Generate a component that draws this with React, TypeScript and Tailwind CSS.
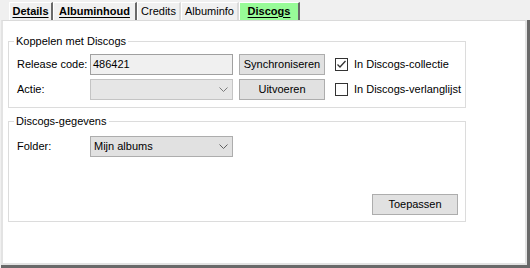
import React from 'react';

// Tabs of the album editor (widths follow the WinForms tab strip)
const tabs = [
  { label: 'Details', bold: true, cls: 'w-[44px] border-r-2 border-r-[#696969]' },
  { label: 'Albuminhoud', bold: true, cls: 'w-[84px] border-r-2 border-r-[#696969]' },
  { label: 'Credits', bold: false, cls: 'w-[44px] border-r-2 border-r-[#dadada]' },
  { label: 'Albuminfo', bold: false, cls: 'w-[58px] border-r-2 border-r-[#dadada]' },
  { label: 'Discogs', bold: true, cls: 'w-[61px] border-r-2 border-r-[#696969] bg-[#98fb98]', active: true },
];

const Chevron = ({ color }: { color: string }) => (
  <svg width="9" height="5" viewBox="0 0 9 5" className="shrink-0">
    <polyline points="0.5,0.5 4.5,4.5 8.5,0.5" fill="none" stroke={color} strokeWidth="1" />
  </svg>
);

const CheckBox = ({ checked, label }: { checked: boolean; label: string }) => (
  <div className="flex items-center">
    <div className="w-[13px] h-[13px] border border-[#333333] bg-white flex items-center justify-center">
      {checked && (
        <svg width="11" height="11" viewBox="0 0 11 11">
          <polyline points="1.5,5.5 4,8 9.5,2" fill="none" stroke="#333333" strokeWidth="1.3" />
        </svg>
      )}
    </div>
    <span className="ml-[6px]">{label}</span>
  </div>
);

const Button = ({ children, className = '' }: { children: React.ReactNode; className?: string }) => (
  <div className={`w-[86px] h-[21px] bg-[#e1e1e1] border border-[#adadad] flex items-center justify-center ${className}`}>
    {children}
  </div>
);

export default function App() {
  return (
    <div className="w-[530px] h-[268px] bg-[#f0f0f0] flex flex-col text-[11px] leading-[13px] text-black font-['Liberation_Sans',Arial,sans-serif]">
      {/* tab strip */}
      <div className="h-[20px] pt-[2px] pl-[9px] flex">
        {tabs.map((t) => (
          <div
            key={t.label}
            className={`h-[18px] border-l border-t border-white flex items-center justify-center pb-[1px] ${t.cls} ${
              t.bold ? 'font-bold underline decoration-1 underline-offset-[2px]' : ''
            }`}
          >
            {t.label}
          </div>
        ))}
      </div>

      {/* tab page */}
      <div className="flex-1 ml-[1px] border-r-[3px] border-b-[3px] border-[#696969] flex">
        <div className="flex-1 bg-white border-l-2 border-r-2 border-b-2 border-[#e3e3e3] border-t border-t-[#dadada] pt-[14px] pl-[5px]">
          <fieldset className="w-[458px] border border-[#dcdcdc]">
            <legend className="ml-[5px] px-[2px]">Koppelen met Discogs</legend>
            <div className="mt-[6px] pl-[8px] pb-[7px] flex flex-col gap-[4px]">
              <div className="flex items-center h-[21px]">
                <span className="w-[73px]">Release code:</span>
                <div className="w-[143px] h-[21px] border border-[#a0a0a0] bg-[#f0f0f0] pl-[2px] flex items-center">
                  486421
                </div>
                <Button className="ml-[6px]">Synchroniseren</Button>
                <div className="ml-[10px]">
                  <CheckBox checked label="In Discogs-collectie" />
                </div>
              </div>
              <div className="flex items-center h-[21px]">
                <span className="w-[73px]">Actie:</span>
                <div className="w-[143px] h-[21px] border border-[#c4c4c4] bg-[#e6e6e6] flex items-center justify-end pr-[4px]">
                  <Chevron color="#7a7a7a" />
                </div>
                <Button className="ml-[6px]">Uitvoeren</Button>
                <div className="ml-[10px]">
                  <CheckBox checked={false} label="In Discogs-verlanglijst" />
                </div>
              </div>
            </div>
          </fieldset>

          <fieldset className="mt-[7px] w-[458px] border border-[#dcdcdc]">
            <legend className="ml-[5px] px-[2px]">Discogs-gegevens</legend>
            <div className="mt-[8px] pl-[8px] pr-[7px] pb-[6px] flex flex-col">
              <div className="flex items-center h-[21px]">
                <span className="w-[73px]">Folder:</span>
                <div className="w-[143px] h-[21px] border border-[#adadad] bg-[#e1e1e1] flex items-center justify-between pl-[3px] pr-[4px]">
                  <span>Mijn albums</span>
                  <Chevron color="#606060" />
                </div>
              </div>
              <div className="mt-[37px] flex justify-end">
                <Button>Toepassen</Button>
              </div>
            </div>
          </fieldset>
        </div>
      </div>
    </div>
  );
}
